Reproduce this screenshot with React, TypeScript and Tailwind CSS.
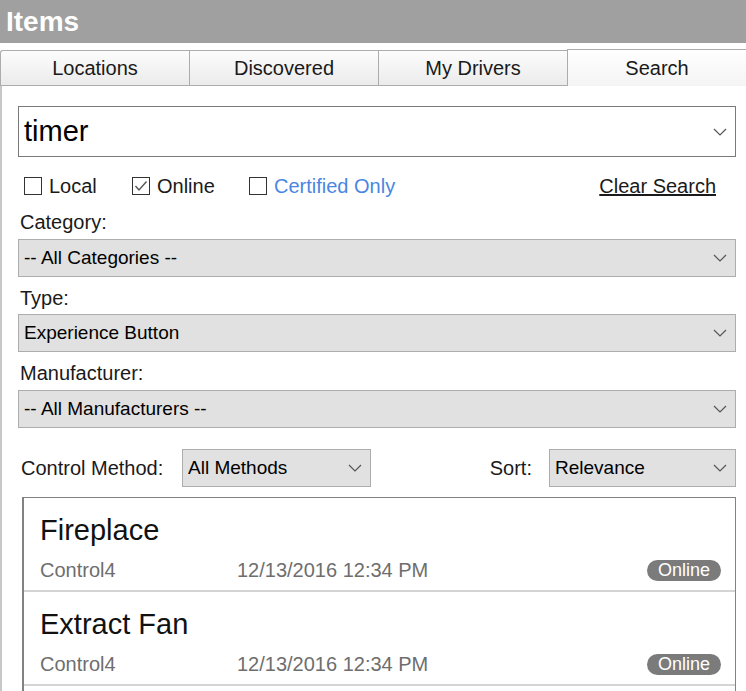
import React, { useState } from 'react';

type Driver = {
  name: string;
  maker: string;
  modified: string;
  status: string;
};

const TABS = ['Locations', 'Discovered', 'My Drivers', 'Search'];

const RESULTS: Driver[] = [
  { name: 'Fireplace', maker: 'Control4', modified: '12/13/2016 12:34 PM', status: 'Online' },
  { name: 'Extract Fan', maker: 'Control4', modified: '12/13/2016 12:34 PM', status: 'Online' },
];

// ================= Small pieces =================
const Chevron: React.FC = () => (
  <svg width="14" height="8" viewBox="0 0 14 8" className="shrink-0">
    <path d="M1 1 L7 7 L13 1" fill="none" stroke="#555" strokeWidth="1.2" />
  </svg>
);

const CheckBox: React.FC<{
  label: string;
  checked: boolean;
  onToggle: () => void;
  labelClass?: string;
  className?: string;
}> = ({ label, checked, onToggle, labelClass = 'text-[#1a1a1a]', className = '' }) => (
  <button type="button" onClick={onToggle} className={`flex items-center gap-[7px] ${className}`}>
    <span className="w-[18px] h-[18px] shrink-0 border border-[#333] bg-white flex items-center justify-center">
      {checked && (
        <svg width="14" height="12" viewBox="0 0 14 12">
          <path d="M1.5 6 L5 10 L12.5 1.5" fill="none" stroke="#555" strokeWidth="1.4" />
        </svg>
      )}
    </span>
    <span className={labelClass}>{label}</span>
  </button>
);

const SelectBox: React.FC<{ value: string; className?: string }> = ({ value, className = '' }) => (
  <div
    className={`h-[38px] bg-[#e1e1e1] border border-[#adadad] flex items-center justify-between pl-[5px] pr-[8px] text-[19px] text-black ${className}`}
  >
    <span className="truncate">{value}</span>
    <Chevron />
  </div>
);

const Label: React.FC<{ text: string }> = ({ text }) => (
  <div className="text-[20px] leading-[24px] text-[#1a1a1a] h-[24px]">{text}</div>
);

// ================= Main =================
export default function App() {
  const [tab, setTab] = useState('Search');
  const [query] = useState('timer');
  const [local, setLocal] = useState(false);
  const [online, setOnline] = useState(true);
  const [certified, setCertified] = useState(false);

  return (
    <div
      className="w-[746px] h-[691px] overflow-hidden bg-white flex flex-col"
      style={{ fontFamily: '"Liberation Sans", Arial, sans-serif' }}
    >
      {/* ================= Title ================= */}
      <div className="h-[43px] shrink-0 bg-[#a0a0a0] flex items-center px-[6px]">
        <span className="text-white font-bold text-[28px] leading-none">Items</span>
      </div>

      {/* ================= Tabs ================= */}
      <div className="h-[43px] shrink-0 flex items-end pt-[6px]">
        {TABS.map((t, i) => {
          const active = tab === t;
          const width = i === 3 ? 'flex-1' : 'w-[189px]';
          return (
            <button
              key={t}
              type="button"
              onClick={() => setTab(t)}
              className={`${width} flex items-center justify-center text-[20px] text-[#1a1a1a] border-[#acacac] bg-gradient-to-b ${
                active
                  ? 'h-[37px] border-t border-l from-white to-[#f4f4f4]'
                  : 'h-[36px] border-t border-l border-b from-[#fcfcfc] to-[#ebebeb]'
              } ${i === 0 ? 'rounded-tl-[3px]' : ''}`}
            >
              {t}
            </button>
          );
        })}
      </div>

      {/* ================= Search panel ================= */}
      <div className="flex-1 flex flex-col border-l-2 border-[#c8c8c8] pl-[16px] pr-[10px] pt-[20px] min-h-0">
        <div className="h-[51px] shrink-0 border border-[#7a7a7a] bg-white flex items-center justify-between pl-[5px] pr-[8px]">
          <span className="text-[29px] text-black leading-none">{query}</span>
          <Chevron />
        </div>

        <div className="mt-[17px] h-[24px] flex items-center justify-between pl-[6px] pr-[20px] text-[20px]">
          <div className="flex items-center">
            <CheckBox label="Local" checked={local} onToggle={() => setLocal(!local)} className="w-[108px]" />
            <CheckBox label="Online" checked={online} onToggle={() => setOnline(!online)} className="w-[117px]" />
            <CheckBox
              label="Certified Only"
              checked={certified}
              onToggle={() => setCertified(!certified)}
              labelClass="text-[#4a86e2]"
            />
          </div>
          <span className="underline text-[#1a1a1a]">Clear Search</span>
        </div>

        <div className="mt-[12px] pl-[2px]">
          <Label text="Category:" />
        </div>
        <SelectBox value="-- All Categories --" className="mt-[5px]" />

        <div className="mt-[9px] pl-[2px]">
          <Label text="Type:" />
        </div>
        <SelectBox value="Experience Button" className="mt-[4px]" />

        <div className="mt-[9px] pl-[2px]">
          <Label text="Manufacturer:" />
        </div>
        <SelectBox value="-- All Manufacturers --" className="mt-[5px]" />

        {/* ================= Filters ================= */}
        <div className="mt-[21px] flex items-center text-[20px] text-[#1a1a1a]">
          <span className="pl-[3px] w-[164px]">Control Method:</span>
          <SelectBox value="All Methods" className="w-[189px]" />
          <span className="ml-auto mr-[17px]">Sort:</span>
          <SelectBox value="Relevance" className="w-[187px]" />
        </div>

        {/* ================= Results ================= */}
        <div className="mt-[10px] ml-[4px] flex-1 border-t border-l-2 border-r border-[#828282] min-h-0">
          {RESULTS.map((r) => (
            <div key={r.name} className="h-[94px] border-b-2 border-[#d4d4d4] pl-[16px] pr-[14px] pt-[15px] flex flex-col">
              <div className="text-[29px] leading-[34px] text-[#111]">{r.name}</div>
              <div className="mt-[11px] flex items-center text-[20px] leading-[24px] text-[#6e6e6e]">
                <span className="w-[197px]">{r.maker}</span>
                <span>{r.modified}</span>
                <span className="ml-auto rounded-full bg-[#7b7b7b] text-white text-[18px] leading-[21px] px-[11px]">
                  {r.status}
                </span>
              </div>
            </div>
          ))}
        </div>
      </div>
    </div>
  );
}
